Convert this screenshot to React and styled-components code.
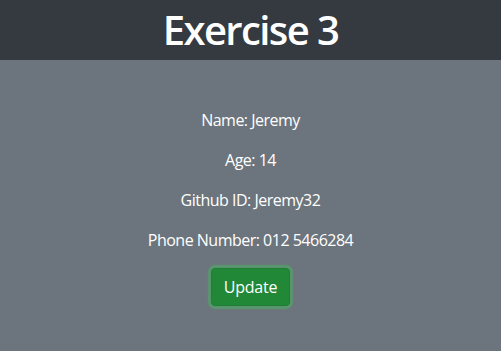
import React from "react";
import styled, { createGlobalStyle } from "styled-components";

const Global = createGlobalStyle`
  html, body { margin: 0; padding: 0; }
  body {
    font-family: "Open Sans", "Noto Sans", sans-serif;
    background: #6c757d;
    color: #fff;
  }
`;

const Page = styled.div`
  min-height: 100vh;
  background: #6c757d;
  display: flex;
  flex-direction: column;
`;

const Header = styled.header`
  background: #343a40;
  height: 60px;
  display: flex;
  align-items: center;
  justify-content: center;
`;

const Title = styled.h1`
  margin: 0;
  font-size: 40px;
  font-weight: 600;
  letter-spacing: -1.6px;
  line-height: 1.2;
  color: #fff;
`;

const Content = styled.main`
  padding-top: 48px;
  display: flex;
  flex-direction: column;
  align-items: center;
  text-align: center;
`;

const Line = styled.p`
  margin: 0 0 16px;
  font-size: 16px;
  line-height: 24px;
  letter-spacing: -0.5px;
`;

const Button = styled.button`
  font-family: inherit;
  font-size: 16px;
  line-height: 24px;
  letter-spacing: -0.2px;
  padding: 6px 12px;
  border: 1px solid #1e7e34;
  border-radius: 4px;
  background: #218838;
  color: #fff;
  box-shadow: 0 0 0 3.2px rgba(72, 180, 97, 0.5);
  cursor: pointer;
`;

export default function App() {
  return (
    <>
      <Global />
      <Page>
        <Header>
          <Title>Exercise 3</Title>
        </Header>
        <Content>
          <Line>Name: Jeremy</Line>
          <Line>Age: 14</Line>
          <Line>Github ID: Jeremy32</Line>
          <Line>Phone Number: 012 5466284</Line>
          <Button>Update</Button>
        </Content>
      </Page>
    </>
  );
}
